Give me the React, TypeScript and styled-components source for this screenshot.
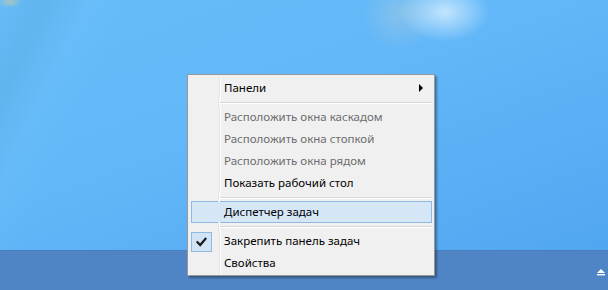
import React from "react";
import styled, { createGlobalStyle } from "styled-components";

const GlobalStyle = createGlobalStyle`
  html, body {
    margin: 0;
    padding: 0;
    overflow: hidden;
  }
  body {
    font-family: "Noto Sans", "Liberation Sans", sans-serif;
  }
`;

const Screen = styled.div`
  position: relative;
  width: 608px;
  height: 290px;
  display: flex;
  flex-direction: column;
  overflow: hidden;
`;

const Desktop = styled.div`
  flex: 1;
  background:
    radial-gradient(ellipse 45px 30px at 445px 12px, rgba(235, 248, 255, 0.7), rgba(235, 248, 255, 0) 100%),
    radial-gradient(ellipse 38px 36px at 400px 14px, rgba(175, 205, 220, 0.45), rgba(175, 205, 220, 0) 100%),
    linear-gradient(115deg, rgba(255, 255, 255, 0) 0px, rgba(90, 170, 215, 0.35) 40px, rgba(120, 200, 250, 0.15) 80px, rgba(255, 255, 255, 0) 120px),
    radial-gradient(ellipse 12px 6px at 10px 2px, rgba(220, 210, 150, 0.6), rgba(220, 210, 150, 0)),
    linear-gradient(160deg, #66bcfa 0%, #62b7f8 45%, #51a6f1 100%);
`;

const Taskbar = styled.div`
  height: 40px;
  background: #4f85c5;
  border-top: 1px solid #4a7fbe;
  display: flex;
  align-items: center;
  justify-content: flex-end;
  padding-right: 1px;
  box-sizing: border-box;
`;

const TrayButton = styled.div`
  width: 12px;
  height: 12px;
  display: flex;
  align-items: center;
  justify-content: center;
  margin-top: 2px;
`;

const Menu = styled.div`
  position: absolute;
  left: 187px;
  top: 74px;
  width: 248px;
  box-sizing: border-box;
  background: #f0f0f0;
  border: 1px solid #979797;
  padding: 2px 1px 1px 3px;
  box-shadow: 2px 2px 2px rgba(0, 0, 0, 0.35);
  font-size: 11.5px;
`;

const Item = styled.div<{ $hot?: boolean; $disabled?: boolean }>`
  display: grid;
  grid-template-columns: 28px 1fr 14px;
  height: 22px;
  box-sizing: border-box;
  align-items: center;
  color: ${(p) => (p.$disabled ? "#6d6d6d" : "#000")};
  background: ${(p) => (p.$hot ? "#d5e6f7" : "transparent")};
  border: 1px solid ${(p) => (p.$hot ? "#90b8e0" : "transparent")};
  margin-right: 1px;
`;

const Gutter = styled.div<{ $hide?: boolean }>`
  display: flex;
  align-items: center;
  border-right: 1px solid ${(p) => (p.$hide ? "transparent" : "#e2e3e3")};
  box-shadow: ${(p) => (p.$hide ? "none" : "1px 0 0 #ffffff")};
  box-sizing: border-box;
  margin-left: -1px;
  margin-top: -1px;
  margin-bottom: -1px;
  height: calc(100% + 2px);
`;

const Label = styled.span`
  padding-left: 4px;
  white-space: nowrap;
  line-height: 20px;
`;

const Arrow = styled.span`
  width: 0;
  height: 0;
  border-top: 4px solid transparent;
  border-bottom: 4px solid transparent;
  border-left: 4px solid #000;
  margin-left: 2px;
`;

const CheckBox = styled.div`
  width: 21px;
  height: 20px;
  box-sizing: border-box;
  background: #d1e4f6;
  border: 1px solid #90b8e0;
  display: flex;
  align-items: center;
  justify-content: center;
  margin-top: 2px;
`;

const Separator = styled.div`
  display: grid;
  grid-template-columns: 28px 1fr;
  height: 7px;
  margin-right: 1px;
`;

const SepLine = styled.div`
  align-self: center;
  height: 1px;
  background: #d7d7d7;
  box-shadow: 0 1px 0 #ffffff;
  margin-left: 1px;
`;

type Entry =
  | { kind: "item"; label: string; disabled?: boolean; hot?: boolean; checked?: boolean; submenu?: boolean }
  | { kind: "sep" };

const entries: Entry[] = [
  { kind: "item", label: "Панели", submenu: true },
  { kind: "sep" },
  { kind: "item", label: "Расположить окна каскадом", disabled: true },
  { kind: "item", label: "Расположить окна стопкой", disabled: true },
  { kind: "item", label: "Расположить окна рядом", disabled: true },
  { kind: "item", label: "Показать рабочий стол" },
  { kind: "sep" },
  { kind: "item", label: "Диспетчер задач", hot: true },
  { kind: "sep" },
  { kind: "item", label: "Закрепить панель задач", checked: true },
  { kind: "item", label: "Свойства" },
];

const Check = () => (
  <svg width="11" height="10" viewBox="0 0 11 10">
    <path d="M1.5 5.2 L4.2 8 L9.5 1.8" fill="none" stroke="#1a1a1a" strokeWidth="2.2" strokeLinecap="square" />
  </svg>
);

export default function App() {
  return (
    <Screen>
      <GlobalStyle />
      <Desktop />
      <Taskbar>
        <TrayButton>
          <svg width="10" height="8" viewBox="0 0 10 8">
            <path d="M1 5 L5 1 L9 5 Z" fill="#ffffff" />
            <rect x="1" y="6" width="8" height="1.4" fill="#ffffff" />
          </svg>
        </TrayButton>
      </Taskbar>
      <Menu>
        {entries.map((e, i) =>
          e.kind === "sep" ? (
            <Separator key={i}>
              <Gutter />
              <SepLine />
            </Separator>
          ) : (
            <Item key={i} $hot={e.hot} $disabled={e.disabled}>
              <Gutter $hide={e.hot}>{e.checked && <CheckBox><Check /></CheckBox>}</Gutter>
              <Label>{e.label}</Label>
              {e.submenu ? <Arrow /> : <span />}
            </Item>
          )
        )}
      </Menu>
    </Screen>
  );
}
